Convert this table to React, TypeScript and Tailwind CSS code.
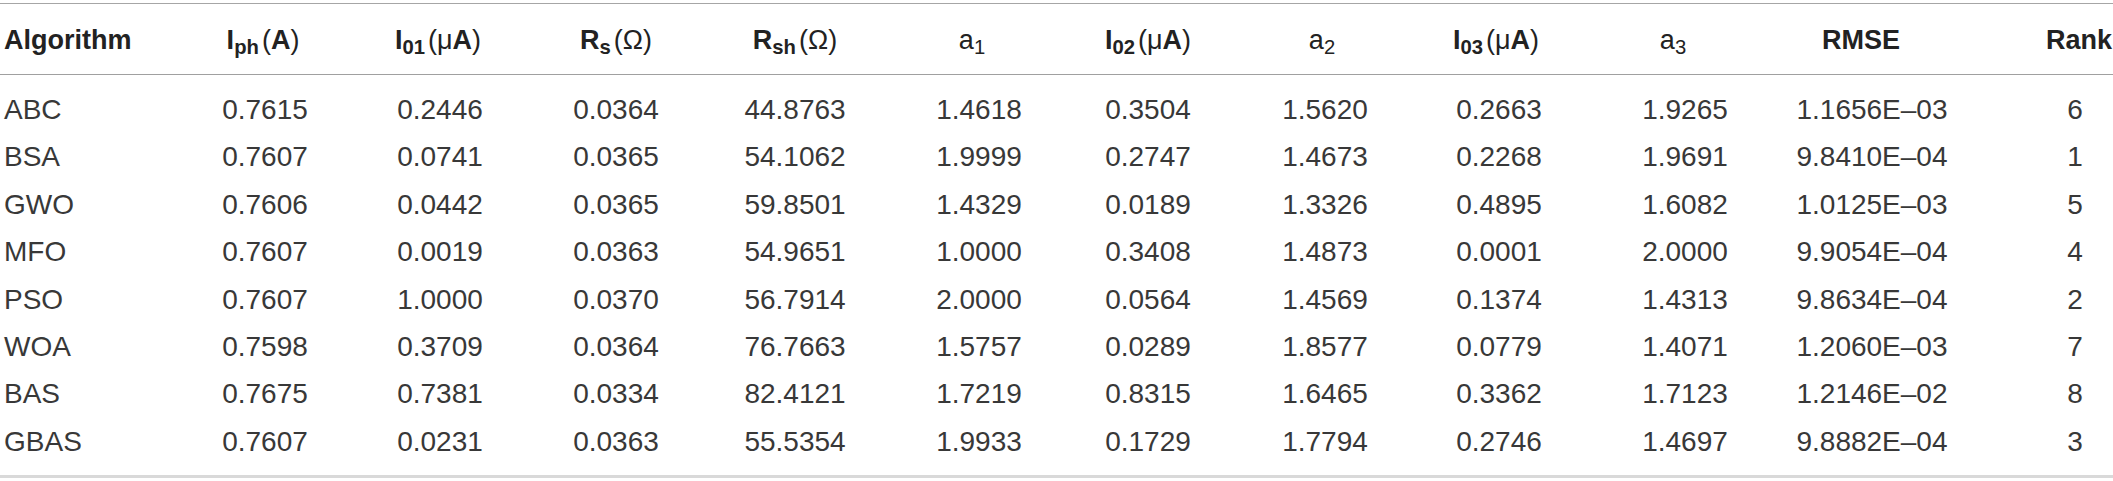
const rows = [
  ['ABC', '0.7615', '0.2446', '0.0364', '44.8763', '1.4618', '0.3504', '1.5620', '0.2663', '1.9265', '1.1656E–03', '6'],
  ['BSA', '0.7607', '0.0741', '0.0365', '54.1062', '1.9999', '0.2747', '1.4673', '0.2268', '1.9691', '9.8410E–04', '1'],
  ['GWO', '0.7606', '0.0442', '0.0365', '59.8501', '1.4329', '0.0189', '1.3326', '0.4895', '1.6082', '1.0125E–03', '5'],
  ['MFO', '0.7607', '0.0019', '0.0363', '54.9651', '1.0000', '0.3408', '1.4873', '0.0001', '2.0000', '9.9054E–04', '4'],
  ['PSO', '0.7607', '1.0000', '0.0370', '56.7914', '2.0000', '0.0564', '1.4569', '0.1374', '1.4313', '9.8634E–04', '2'],
  ['WOA', '0.7598', '0.3709', '0.0364', '76.7663', '1.5757', '0.0289', '1.8577', '0.0779', '1.4071', '1.2060E–03', '7'],
  ['BAS', '0.7675', '0.7381', '0.0334', '82.4121', '1.7219', '0.8315', '1.6465', '0.3362', '1.7123', '1.2146E–02', '8'],
  ['GBAS', '0.7607', '0.0231', '0.0363', '55.5354', '1.9933', '0.1729', '1.7794', '0.2746', '1.4697', '9.8882E–04', '3'],
];

const grid =
  'grid grid-cols-[180px_170px_180px_172px_186px_182px_156px_198px_150px_222px_152px_165px]';

function Unit({ sym, bold }: { sym: string; bold?: string }) {
  return (
    <span className="ml-[3px]">
      <span className="font-normal">(</span>
      <span className="font-normal">{sym}</span>
      {bold && <span className="font-bold">{bold}</span>}
      <span className="font-normal">)</span>
    </span>
  );
}

function Head() {
  return (
    <div className={`${grid} h-[70px] items-center pt-[2px] text-[27px] font-bold leading-[30px] text-[#222]`}>
      <div className="pl-[4px]">Algorithm</div>
      <div className="pr-[4px] text-center">
        I<sub>ph</sub>
        <span className="ml-[3px]">
          <span className="font-normal">(</span>A<span className="font-normal">)</span>
        </span>
      </div>
      <div className="pr-[4px] text-center">
        I<sub>01</sub>
        <Unit sym="μ" bold="A" />
      </div>
      <div className="text-center">
        R<sub>s</sub>
        <Unit sym="Ω" />
      </div>
      <div className="text-center">
        R<sub>sh</sub>
        <Unit sym="Ω" />
      </div>
      <div className="pr-[14px] text-center font-normal">
        a<sub>1</sub>
      </div>
      <div className="text-center">
        I<sub>02</sub>
        <Unit sym="μ" bold="A" />
      </div>
      <div className="pr-[6px] text-center font-normal">
        a<sub>2</sub>
      </div>
      <div className="pr-[6px] text-center">
        I<sub>03</sub>
        <Unit sym="μ" bold="A" />
      </div>
      <div className="pr-[24px] text-center font-normal">
        a<sub>3</sub>
      </div>
      <div className="pr-[22px] text-center">RMSE</div>
      <div className="pr-[1px] text-right">Rank</div>
    </div>
  );
}

export default function App() {
  return (
    <div className="w-[2113px] h-[481px] bg-white pt-[3px] font-['Liberation_Sans',Arial,sans-serif] overflow-hidden">
      <div className="border-t border-[#a6a6a6]">
        <Head />
      </div>
      <div className="border-t border-[#a0a0a0] pt-[11px] pb-[10px] text-[28px] text-[#383838]">
        {rows.map(r => (
          <div key={r[0]} className={`${grid} h-[47.4px] leading-[47.4px]`}>
            {r.map((v, i) => (
              <div
                key={i}
                className={i === 0 ? 'pl-[4px]' : i === 11 ? 'pl-[89px] text-center' : 'text-center'}
              >
                {v}
              </div>
            ))}
          </div>
        ))}
      </div>
      <div className="h-[3px] bg-[#d9d9d9]" />
    </div>
  );
}
